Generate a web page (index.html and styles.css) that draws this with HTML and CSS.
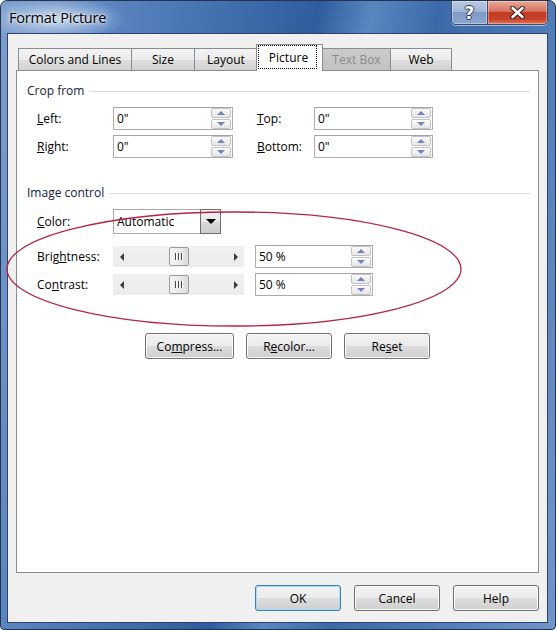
FILE: index.html
```html
<!DOCTYPE html>
<html lang="en">
<head>
    <meta charset="UTF-8">
    <meta name="viewport" content="width=device-width, initial-scale=1.0">
    <title>Format Picture</title>
    <link rel="stylesheet" href="styles.css">
</head>
<body>
    <div class="window">
        <div class="titlebar">
            <span class="caption">Format Picture</span>
            <div class="caption-buttons">
                <div class="cap-btn cap-help">?</div>
                <div class="cap-btn cap-close">
                    <svg width="15" height="13" viewBox="0 0 15 13">
                        <path d="M2.5 2 L12.5 11 M12.5 2 L2.5 11" stroke="#3b1a14" stroke-width="4.6" stroke-linecap="round"/>
                        <path d="M2.5 2 L12.5 11 M12.5 2 L2.5 11" stroke="#ffffff" stroke-width="2.6" stroke-linecap="round"/>
                    </svg>
                </div>
            </div>
        </div>

        <div class="client">
            <div class="tabs">
                <div class="tab tab-colors">Colors and Lines</div>
                <div class="tab tab-size">Size</div>
                <div class="tab tab-layout">Layout</div>
                <div class="tab tab-picture active"><span class="focus">Picture</span></div>
                <div class="tab tab-textbox disabled">Text Box</div>
                <div class="tab tab-web">Web</div>
            </div>

            <div class="panel">
                <div class="group-title"><span>Crop from</span></div>
                <div class="crop-row">
                    <label class="label"><u>L</u>eft:</label>
                    <div class="spin-box"><span class="value">0"</span><div class="spinner"><span class="up"></span><span class="down"></span></div></div>
                    <label class="label label-right"><u>T</u>op:</label>
                    <div class="spin-box short"><span class="value">0"</span><div class="spinner"><span class="up"></span><span class="down"></span></div></div>
                </div>
                <div class="crop-row">
                    <label class="label"><u>R</u>ight:</label>
                    <div class="spin-box"><span class="value">0"</span><div class="spinner"><span class="up"></span><span class="down"></span></div></div>
                    <label class="label label-right"><u>B</u>ottom:</label>
                    <div class="spin-box short"><span class="value">0"</span><div class="spinner"><span class="up"></span><span class="down"></span></div></div>
                </div>

                <div class="group-title second"><span>Image control</span></div>
                <div class="color-row">
                    <label class="label"><u>C</u>olor:</label>
                    <div class="combo">
                        <span class="value">Automatic</span>
                        <div class="combo-btn"><span class="caret"></span></div>
                    </div>
                </div>
                <div class="slider-row">
                    <label class="label">Brig<u>h</u>tness:</label>
                    <div class="slider">
                        <span class="arrow left"></span>
                        <div class="track"><div class="thumb"><i></i><i></i><i></i></div></div>
                        <span class="arrow right"></span>
                    </div>
                    <div class="spin-box pct"><span class="value">50 %</span><div class="spinner"><span class="up"></span><span class="down"></span></div></div>
                </div>
                <div class="slider-row">
                    <label class="label">Co<u>n</u>trast:</label>
                    <div class="slider">
                        <span class="arrow left"></span>
                        <div class="track"><div class="thumb"><i></i><i></i><i></i></div></div>
                        <span class="arrow right"></span>
                    </div>
                    <div class="spin-box pct"><span class="value">50 %</span><div class="spinner"><span class="up"></span><span class="down"></span></div></div>
                </div>

                <div class="actions">
                    <button class="btn btn-compress">Co<u>m</u>press...</button>
                    <button class="btn">R<u>e</u>color...</button>
                    <button class="btn">Re<u>s</u>et</button>
                </div>
            </div>

            <div class="footer">
                <button class="btn default">OK</button>
                <button class="btn">Cancel</button>
                <button class="btn">Help</button>
            </div>
        </div>

        <!-- red marker ring around the brightness / contrast controls -->
        <svg class="marker" width="556" height="630" viewBox="0 0 556 630">
            <ellipse cx="234" cy="269" rx="227" ry="57" fill="none" stroke="#b72546" stroke-width="1.3"/>
        </svg>
    </div>
</body>
</html>
```

FILE: styles.css
```css
body {
    margin: 0;
    padding: 0;
    background-color: #ffffff;
}

.window {
    position: relative;
    width: 556px;
    height: 630px;
    box-sizing: border-box;
    border: 1px solid #23344f;
    border-radius: 7px 7px 4px 4px;
    background:
        radial-gradient(ellipse 70px 22px at 55px 18px, rgba(225, 236, 250, 0.75), rgba(225, 236, 250, 0) 100%),
        linear-gradient(100deg, #7d9fce 0%, #5883bf 18%, #3f6cab 36%, #2f5c9e 48%, #5a86c1 56%, #3c69a9 66%, #4a77b5 80%, #7096cb 100%);
    font-family: "Open Sans", "Noto Sans", sans-serif;
    font-size: 12px;
    color: #000;
    overflow: hidden;
}

/* ---------- title bar ---------- */

.titlebar {
    height: 32px;
    display: flex;
    align-items: flex-start;
    justify-content: space-between;
}

.caption {
    margin: 7px 0 0 8px;
    font-size: 14.5px;
    letter-spacing: -0.2px;
    color: #000;
    text-shadow: 0 0 6px rgba(255, 255, 255, 0.9), 0 0 3px rgba(255, 255, 255, 0.9);
}

.caption-buttons {
    display: flex;
    margin-right: 7px;
    border: 1px solid #3b4f70;
    border-top: none;
    border-radius: 0 0 5px 5px;
    overflow: hidden;
    box-shadow: 0 1px 0 rgba(255, 255, 255, 0.5);
}

.cap-btn {
    height: 23px;
    display: flex;
    align-items: center;
    justify-content: center;
    box-shadow: inset 0 0 0 1px rgba(255, 255, 255, 0.35);
}

.cap-help {
    width: 35px;
    border-right: 1px solid #3b4f70;
    background: linear-gradient(#b9c9e0 0%, #a3b7d6 45%, #7f9ac4 50%, #8aa5cf 100%);
    color: #fff;
    font-family: "DejaVu Sans", sans-serif;
    font-weight: bold;
    font-size: 17px;
    text-shadow: 1px 0 0 #2c3a55, -1px 0 0 #2c3a55, 0 1px 0 #2c3a55, 0 -1px 0 #2c3a55;
}

.cap-close {
    width: 59px;
    background: linear-gradient(#e9a897 0%, #d6735f 45%, #c23a22 50%, #c8432b 80%, #e07a56 100%);
}

/* ---------- client area ---------- */

.client {
    margin: 0 7px 0 6px;
    height: 590px;
    box-sizing: border-box;
    border: 1px solid #2d4369;
    background-color: #f0f0f0;
    padding: 10px 8px 0 8px;
}

.tabs {
    display: flex;
    align-items: flex-end;
    height: 27px;
    margin: 0 0 -1px 2px;
    position: relative;
    z-index: 1;
}

.tab {
    height: 22px;
    margin-bottom: 1px;
    box-sizing: border-box;
    border: 1px solid #898c95;
    border-bottom: none;
    background: linear-gradient(#f3f3f3 0%, #ebebeb 50%, #dedede 51%, #d3d3d3 100%);
    display: flex;
    align-items: center;
    justify-content: center;
    padding-bottom: 1px;
}

.tab + .tab {
    margin-left: -1px;
}

.tab-colors { width: 114px; }
.tab-size { width: 64px; }
.tab-layout { width: 64px; }
.tab-textbox { width: 69px; }
.tab-web { width: 62px; }

.tab.active {
    width: 67px;
    height: 27px;
    margin: 0 -1px 0 -2px;
    background: #ffffff;
    padding: 0 0 2px 0;
    align-items: flex-start;
    position: relative;
    z-index: 1;
}

.tab.active + .tab {
    margin-left: 0;
}

/* keyboard focus rectangle on the selected tab */
.focus {
    display: flex;
    align-items: center;
    height: 24px;
    box-sizing: border-box;
    margin: 0 4px 0 0;
    padding: 0 8px 0 10px;
    border: 1px dotted #000;
}

.tab.disabled {
    background: linear-gradient(#cbcbcb 0%, #c3c3c3 100%);
    color: #8a8a8a;
}

.panel {
    height: 503px;
    box-sizing: border-box;
    border: 1px solid #898c95;
    background-color: #ffffff;
    padding: 12px 8px 0 10px;
}

.group-title {
    display: flex;
    align-items: center;
    gap: 5px;
    line-height: 16px;
    color: #12213f;
}

.group-title::after {
    content: '';
    flex: 1;
    height: 1px;
    background-color: #d5dfe5;
    margin-top: 1px;
}

.group-title.second {
    margin-top: 27px;
}

.label {
    width: 76px;
    flex-shrink: 0;
}

.label-right {
    width: 57px;
    margin-left: 24px;
}

.crop-row,
.slider-row,
.color-row {
    display: flex;
    align-items: center;
    padding-left: 10px;
}

.crop-row {
    height: 23px;
    margin-top: 5px;
}

.group-title + .crop-row {
    margin-top: 8px;
}

/* text box with up/down buttons */
.spin-box {
    width: 120px;
    height: 23px;
    box-sizing: border-box;
    border: 1px solid #abadb3;
    border-top-color: #a2a4aa;
    background: #fff;
    display: flex;
    align-items: center;
    justify-content: space-between;
    padding: 0 1px 0 3px;
}

.spin-box.short {
    width: 119px;
}

.spin-box.pct {
    width: 118px;
}

.spinner {
    display: flex;
    flex-direction: column;
    gap: 1px;
}

.spinner span {
    width: 20px;
    height: 10px;
    box-sizing: border-box;
    border: 1px solid #c3c3c3;
    border-radius: 2px;
    background: linear-gradient(#fbfbfb, #e6e6e6);
    display: flex;
    align-items: center;
    justify-content: center;
}

.spinner .up::after,
.spinner .down::after {
    content: '';
    border-left: 4px solid transparent;
    border-right: 4px solid transparent;
}

.spinner .up::after {
    border-bottom: 4px solid #7184c0;
}

.spinner .down::after {
    border-top: 4px solid #7184c0;
}

.color-row {
    margin-top: 8px;
}

.combo {
    width: 108px;
    height: 25px;
    box-sizing: border-box;
    border: 1px solid #a9a9a9;
    background: #fff;
    display: flex;
    align-items: center;
    justify-content: space-between;
    padding-left: 3px;
}

.combo-btn {
    width: 21px;
    height: 25px;
    box-sizing: border-box;
    margin-right: -1px;
    border: 1px solid #6f6f6f;
    background: linear-gradient(#f4f4f4 0%, #e8e8e8 50%, #d9d9d9 51%, #cdcdcd 100%);
    display: flex;
    align-items: center;
    justify-content: center;
}

.caret {
    border-left: 5px solid transparent;
    border-right: 5px solid transparent;
    border-top: 5px solid #000;
}

.slider-row {
    height: 23px;
    margin-top: 5px;
}

.color-row + .slider-row {
    margin-top: 11px;
}

/* horizontal scroll-style slider */
.slider {
    width: 131px;
    height: 21px;
    margin-right: 11px;
    background: linear-gradient(#f0f0f0, #ececec);
    display: flex;
    align-items: center;
}

.arrow {
    width: 17px;
    display: flex;
    justify-content: center;
}

.arrow.left::after {
    content: '';
    border-top: 4px solid transparent;
    border-bottom: 4px solid transparent;
    border-right: 4px solid #3c3c3c;
}

.arrow.right::after {
    content: '';
    border-top: 4px solid transparent;
    border-bottom: 4px solid transparent;
    border-left: 4px solid #3c3c3c;
}

.track {
    flex: 1;
    display: flex;
    justify-content: center;
}

.thumb {
    width: 20px;
    height: 19px;
    box-sizing: border-box;
    border: 1px solid #9c9c9c;
    border-radius: 2px;
    background: linear-gradient(90deg, #f6f6f6 0%, #e9e9e9 50%, #dcdcdc 100%);
    display: flex;
    align-items: center;
    justify-content: center;
    gap: 2px;
}

.thumb i {
    width: 1px;
    height: 7px;
    background: #4a4a4a;
    box-shadow: 1px 0 0 #ffffff;
}

.actions {
    display: flex;
    gap: 12px;
    margin: 37px 0 0 118px;
}

.btn {
    width: 86px;
    height: 26px;
    box-sizing: border-box;
    border: 1px solid #707070;
    border-radius: 3px;
    background: linear-gradient(#f2f2f2 0%, #ebebeb 50%, #dddddd 51%, #cfcfcf 100%);
    box-shadow: inset 0 0 0 1px #fbfbfb;
    font-family: inherit;
    font-size: 12px;
    color: #000;
    padding: 0;
}

.btn-compress {
    width: 89px;
}

.footer {
    display: flex;
    justify-content: flex-end;
    gap: 13px;
    margin-top: 12px;
}

.btn.default {
    border-color: #3c7fb1;
    box-shadow: inset 0 0 0 1px #a6dcf5;
}

.marker {
    position: absolute;
    top: -1px;
    left: -1px;
    pointer-events: none;
}
```
